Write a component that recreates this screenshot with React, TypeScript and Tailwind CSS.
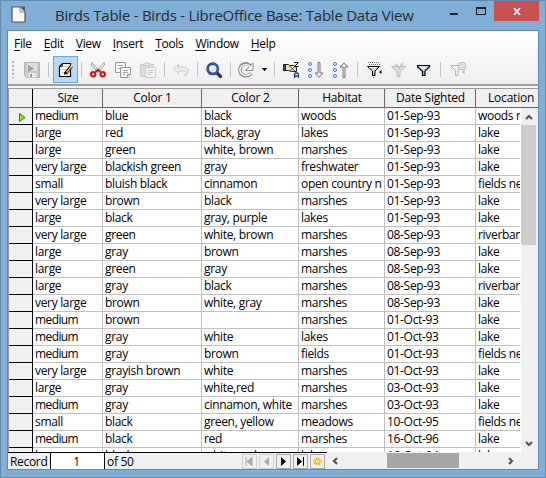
import type { ReactNode } from "react";

const rows: string[][] = [
  ["medium", "blue", "black", "woods", "01-Sep-93", "woods near"],
  ["large", "red", "black, gray", "lakes", "01-Sep-93", "lake"],
  ["large", "green", "white, brown", "marshes", "01-Sep-93", "lake"],
  ["very large", "blackish green", "gray", "freshwater", "01-Sep-93", "lake"],
  ["small", "bluish black", "cinnamon", "open country near", "01-Sep-93", "fields near"],
  ["very large", "brown", "black", "marshes", "01-Sep-93", "lake"],
  ["large", "black", "gray, purple", "lakes", "01-Sep-93", "lake"],
  ["very large", "green", "white, brown", "marshes", "08-Sep-93", "riverbank"],
  ["large", "gray", "brown", "marshes", "08-Sep-93", "lake"],
  ["large", "green", "gray", "marshes", "08-Sep-93", "lake"],
  ["large", "gray", "black", "marshes", "08-Sep-93", "riverbank"],
  ["very large", "brown", "white, gray", "marshes", "08-Sep-93", "lake"],
  ["medium", "brown", "", "marshes", "01-Oct-93", "lake"],
  ["medium", "gray", "white", "lakes", "01-Oct-93", "lake"],
  ["medium", "gray", "brown", "fields", "01-Oct-93", "fields near"],
  ["very large", "grayish brown", "white", "marshes", "01-Oct-93", "lake"],
  ["large", "gray", "white,red", "marshes", "03-Oct-93", "lake"],
  ["medium", "gray", "cinnamon, white", "marshes", "03-Oct-93", "lake"],
  ["small", "black", "green, yellow", "meadows", "10-Oct-95", "fields near"],
  ["medium", "black", "red", "marshes", "16-Oct-96", "lake"],
  ["large", "black", "white, red", "lakes", "16-Oct-94", "lake"],
];

const headers = ["Size", "Color 1", "Color 2", "Habitat", "Date Sighted", "Location"];
const menus = ["File", "Edit", "View", "Insert", "Tools", "Window", "Help"];
const bodyGrid = "grid grid-cols-[24px_70px_99px_97px_86px_91px_44px]";

function Icon({ children, className = "" }: { children: ReactNode; className?: string }) {
  return (
    <svg viewBox="0 0 16 16" className={`h-4 w-4 shrink-0 ${className}`} fill="none">
      {children}
    </svg>
  );
}

function Sep({ className = "" }: { className?: string }) {
  return <div className={`h-[15px] w-px shrink-0 bg-[#c2c2c2] ${className}`} />;
}

function Toolbar() {
  return (
    <div className="flex h-[29px] items-center">
      <svg viewBox="0 0 3 17" className="ml-1 h-[17px] w-[3px] shrink-0">
        <path d="M1 0v17" stroke="#777" strokeWidth="1" strokeDasharray="2 2" />
      </svg>
      <Icon className="ml-[9px]">
        <path d="M.5.500h15v15H2.5L.5 13.500V.5z" fill="#c9c9c9" stroke="#b0b0b0" />
        <path d="M3 1h10v8H3z" fill="#dedede" />
        <path d="M4.500 11h8v4.500h-8z" fill="#e8e8e8" />
        <path d="M6 12h2v3H6z" fill="#999" />
        <path d="M4 3l6 3.500L4 10z" fill="#9c9c9c" />
      </Icon>
      <Sep className="ml-2" />
      <div className="ml-1 flex h-[27px] w-[25px] shrink-0 items-center justify-center border border-[#66a7e8] bg-[#b9d8f5]">
        <Icon>
          <path d="M4.500 1.500h8v13h-11v-10z" fill="#fff" stroke="#000" strokeWidth="1.200" />
          <path d="M1.500 4.500h3v-3" stroke="#000" strokeWidth=".8" />
          <path d="M5.500 4.500h5M4 7.500h4M4 10.500h3" stroke="#c4c4c4" />
          <path d="M7.500 11.500l6-7.500" stroke="#000" strokeWidth="3.400" />
          <path d="M8.500 10.500l5-6.300" stroke="#e9b52f" strokeWidth="1.700" />
          <path d="M6 13l.5-3 2 1.500z" fill="#000" />
          <path d="M13 4.800l1.200-1.500" stroke="#f5df9c" strokeWidth="1.700" />
        </Icon>
      </div>
      <Sep className="ml-[3px]" />
      <Icon className="ml-2">
        <path d="M2 .5l8.500 9-2 1L1.500 3zM14 .5L5.500 9.500l2 1L14.500 3z" fill="#eee" stroke="#929696" strokeWidth=".9" />
        <path d="M5.500 9.500L8 8l2.500 1.500" stroke="#b51a1f" strokeWidth="2" />
        <circle cx="3.200" cy="12.300" r="2.200" stroke="#d4141e" strokeWidth="2.100" />
        <circle cx="12.800" cy="12.300" r="2.200" stroke="#d4141e" strokeWidth="2.100" />
      </Icon>
      <Icon className="ml-[9px]">
        <path d="M.5.500h10v10H.5z" fill="#f7f7f7" stroke="#969696" />
        <path d="M3 3.500h5M3 6.500h3" stroke="#aaa" />
        <path d="M5.500 5.500h10v7l-3 3h-7z" fill="#f7f7f7" stroke="#969696" />
        <path d="M8 8.500h5M8 10.500h5M8 12.500h2" stroke="#aaa" />
        <path d="M12.500 15.500v-3h3" fill="#ddd" stroke="#969696" />
      </Icon>
      <Icon className="ml-[9px]">
        <path d="M.5 2.500h13v12H.5z" fill="#ddd" stroke="#c9c9c9" />
        <path d="M4 3.500V1.500h2C6 0 8 0 8 1.500h2v2z" fill="#eee" stroke="#c5c5c5" />
        <path d="M5.500 5.500h10v10h-10z" fill="#f2f2f2" stroke="#ccc" />
        <path d="M8 8.500h5M8 10.500h5M8 12.500h3" stroke="#ccc" />
      </Icon>
      <Sep className="ml-2" />
      <Icon className="ml-2">
        <path d="M.5 6.500l5-4v2.500h5q4.500 0 4.500 4c0 3-1.500 4-4 5 1.500-1.500 2-2.500 2-4q0-1-2.500-1h-5v3z" fill="#ececec" stroke="#cdcdcd" />
      </Icon>
      <Sep className="ml-2" />
      <Icon className="ml-2">
        <path d="M10.500 10.500l4 4" stroke="#3d3434" strokeWidth="3.200" strokeLinecap="round" />
        <circle cx="6.700" cy="6.800" r="5.200" fill="#dbe8f8" stroke="#243d8b" strokeWidth="2.600" />
        <circle cx="6.700" cy="6.800" r="5.300" stroke="#496fd0" strokeWidth=".8" />
        <path d="M4.500 6.500q.5-2 2.500-2" stroke="#fff" strokeWidth="1.200" />
      </Icon>
      <Sep className="ml-2" />
      <Icon className="ml-[7px]">
        <path d="M13 5C9-.5 2 2 2 8c0 6 7 7.500 11.500 3.500" stroke="#8d8d8d" strokeWidth="3.600" />
        <path d="M15 .8v7.700H7.500L10 6l3-3z" fill="#efefef" stroke="#8d8d8d" strokeWidth="1" />
        <path d="M12.500 5C9 .5 2 3 2 8c0 5.500 7 7 11 3.500" stroke="#efefef" strokeWidth="1.700" />
      </Icon>
      <svg viewBox="0 0 5 3" className="ml-2 h-[3px] w-[5px] shrink-0" shapeRendering="crispEdges">
        <path d="M0 0h5v1H0zM1 1h3v1H1zM2 2h1v1H2z" fill="#000" />
      </svg>
      <Sep className="ml-[7px]" />
      <Icon className="ml-2">
        <path d="M.5 2.500h5l1 1h4l3 2v4h-5l-3-1h-5z" fill="#f0dfb5" stroke="#222" />
        <path d="M.5 2.500h2v6h-2z" fill="#555" stroke="#222" />
        <path d="M6 4l6 5M7 9l5-5" stroke="#444" strokeWidth=".8" />
        <path d="M11 .5h4.500l-4 4h4" stroke="#111" />
        <path d="M11.500 16v-4l1-1h2l1 1v4m-4-2h4" stroke="#203f65" strokeWidth="1.300" />
      </Icon>
      <Icon className="ml-[9px]">
        <path d="M10 .5h2v10.500h3l-4 4.500-4-4.500h3z" fill="#eee" stroke="#777" />
        {[2, 8, 14].map((y) => <circle key={y} cx="2" cy={y} r="1.500" fill="#f5f9ff" stroke="#4278b9" />)}
      </Icon>
      <Icon className="ml-[9px]">
        <path d="M10 15.500h2V5h3L11 .8 7 5h3z" fill="#eee" stroke="#777" />
        {[2, 8, 14].map((y) => <circle key={y} cx="2" cy={y} r="1.500" fill="#f5f9ff" stroke="#4278b9" />)}
      </Icon>
      <Sep className="ml-2" />
      <Icon className="ml-2">
        <path d="M2 .5h11M3 2.500h11" stroke="#777" strokeDasharray="1 1" />
        <path d="M1.500 4.500h12L9 9v4.500H6.500V9z" fill="#c9c9c9" stroke="#000" />
        <path d="M3 5.500h7l-3 3" stroke="#fff" />
        <path d="M15.500 8v4l-2.500-2z" fill="#000" />
        <path d="M7 15.500h1" stroke="#777" />
      </Icon>
      <Icon className="ml-[9px]">
        <path d="M.5 4.500h14L9 9.500v5H6v-5z" fill="#ddd" stroke="#b9b9b9" />
        <path d="M4.500 2l3.500 4 4-5" stroke="#c4c4c4" strokeWidth="2" />
      </Icon>
      <Icon className="ml-[9px]">
        <path d="M1.500 3.500h12v1.200L9 9.200v4.300H6.500V9.200L1.500 4.700z" fill="#a8c3e5" stroke="#000" strokeWidth="1.200" />
        <path d="M3 4.500h8l-4 4" fill="#fff" opacity=".8" />
      </Icon>
      <Sep className="ml-2" />
      <Icon className="ml-[9px]">
        <path d="M.5 3.500h11L8 8.500v5H5.500v-5z" fill="#eee" stroke="#b4b4b4" />
        <path d="M9 1h2l1-1 1 1h2v2l1 1-1 1v2h-2l-1 1-1-1H9V5L8 4l1-1z" fill="#eee" stroke="#b4b4b4" />
        <path d="M10 4h1m2 0h1M12 2v1m0 2v1" stroke="#aaa" />
        <path d="M14.500 8v4L12 10z" fill="#aaa" />
      </Icon>
    </div>
  );
}

function Chevron({ path }: { path: string }) {
  return <svg viewBox="0 0 8 8" className="h-2 w-2 shrink-0"><path d={path} fill="none" stroke="#555" strokeWidth="2.200" /></svg>;
}

function NavButton({ children, disabled = false }: { children: ReactNode; disabled?: boolean }) {
  return (
    <div className={`flex h-[15px] w-[15px] items-center justify-center border ${disabled ? "border-[#d0d0d0]" : "border-[#a9a9a9]"}`}>
      <svg viewBox="0 0 9 9" className="h-[9px] w-[9px]">{children}</svg>
    </div>
  );
}

function DataTable() {
  return (
    <div className="border-l border-t border-[#999]">
      <div className={`${bodyGrid} h-[19px] overflow-hidden border-b border-[#666] bg-[#f0f0f0] tracking-[-0.2px]`}>
        <div className="border-r border-black" />
        {headers.map((h, i) => (
          <div key={h} className={`h-[18px] text-center leading-[17px] ${i === 5 ? "w-[61px] overflow-hidden pl-[12px] text-left" : "border-r border-[#666] pl-px"}`}>{h}</div>
        ))}
      </div>
      <div className="flex h-[344px]">
        <div className="w-[512px] shrink-0 overflow-hidden bg-white">
          {rows.map((row, r) => (
            <div key={r} className={`${bodyGrid} h-[17px]`}>
              <div className="flex items-center border-b border-r border-black bg-[#f0f0f0]">
                {r === 0 && (
                  <svg viewBox="0 0 7 9" className="ml-[10px] mt-0.5 h-[9px] w-[7px]"><path d="M.5.500l5.500 4-5.500 4z" fill="#8fdd2e" stroke="#317c0e" /></svg>
                )}
              </div>
              {row.map((cell, c) => (
                <div key={c} className={`h-[17px] min-w-0 border-b border-[#c0c0c0] pl-[2px] ${c < 5 ? "border-r pr-[2px]" : ""}`}>
                  <div className={`h-4 overflow-hidden whitespace-nowrap leading-[16px] ${cell === "medium" ? "tracking-[-0.6px]" : ""}`}>{cell}</div>
                </div>
              ))}
            </div>
          ))}
        </div>
        <div className="flex w-[15px] flex-col items-center bg-[#f0f0f0]">
          <div className="flex h-[17px] items-center"><Chevron path="M1 6l3-3 3 3" /></div>
          <div className="h-[120px] w-[15px] bg-[#cdcdcd]" />
          <div className="mt-auto flex h-[17px] items-center"><Chevron path="M1 2l3 3 3-3" /></div>
        </div>
      </div>
    </div>
  );
}

function Footer() {
  return (
    <div className="flex h-[17px] bg-[#f0f0f0]">
      <div className="flex w-[319px] border-t border-black">
        <div className="w-[42px] pl-[2px] leading-[17px]">Record</div>
        <div className="w-[55px] border-x border-black bg-white pr-0.5 text-center leading-[17px]">1</div>
        <div className="w-[137px] pl-[2px] leading-[17px]">of 50</div>
        <div className="flex gap-[2px] pt-px">
          <NavButton disabled><path d="M1 0v9M2 4.500L7 0v9z" fill="#aaa" stroke="#aaa" /></NavButton>
          <NavButton disabled><path d="M7 0v9L2 4.500z" fill="#aaa" /></NavButton>
          <NavButton><path d="M2 0v9l5-4.500z" fill="#000" /></NavButton>
          <NavButton><path d="M1 0v9l5-4.500zM7 0h1v9H7z" fill="#000" /></NavButton>
          <NavButton>
            <circle cx="4.500" cy="4.500" r="3.700" fill="none" stroke="#ffbd00" strokeWidth="1.600" strokeDasharray="1.500 1.400" />
            <circle cx="4.500" cy="4.500" r="2.400" fill="#ffe57a" stroke="#e9a500" strokeWidth="1" />
          </NavButton>
        </div>
      </div>
      <div className="flex w-[193px] items-center">
        <div className="flex w-[60px] pl-1"><Chevron path="M6 1L3 4l3 3" /></div>
        <div className="h-[15px] w-[72px] bg-[#a6a6a6]" />
        <div className="ml-[48px]"><Chevron path="M2 1l3 3-3 3" /></div>
      </div>
    </div>
  );
}

export default function App() {
  return (
    <div className="h-[478px] w-[546px] overflow-hidden border border-[#6189ad] bg-[#80aed5] font-['Open_Sans',sans-serif] text-[12px] tracking-[-0.32px] text-black">
      <div className="flex h-[29px] items-start pl-[10px] pr-[6px]">
        <svg viewBox="0 0 15 17" className="mt-[5px] h-[17px] w-[15px] shrink-0">
          <path d="M1 1h8l5 5v10H1z" fill="#f7f7f7" stroke="#555" strokeWidth="1.200" />
          <path d="M8.500.5H14v6z" fill="#505860" />
          <path d="M9 1v5h5" fill="#ddd" stroke="#777" strokeWidth=".7" />
        </svg>
        <div className="ml-[29px] mt-[3px] w-[370px] shrink-0 whitespace-nowrap text-[15px] leading-[22px] tracking-[-0.25px] text-[#252b30]">Birds Table - Birds - LibreOffice Base: Table Data View</div>
        <div className="ml-[25px] mt-[12px] h-[2px] w-2 shrink-0 bg-[#222]" />
        <div className="ml-[18px] mt-[6px] h-2 w-[10px] shrink-0 border border-t-2 border-[#222]" />
        <div className="ml-2 flex h-5 w-[45px] shrink-0 items-center justify-center bg-[#c75050]">
          <svg viewBox="0 0 8 7" className="h-[7px] w-2"><path d="M1 0l6 7M7 0L1 7" stroke="#fff" strokeWidth="1.700" /></svg>
        </div>
      </div>
      <div className="ml-[6px] h-[440px] w-[532px] border border-[#6189ad] bg-[#f0f0f0]">
        <div className="h-[53px] bg-gradient-to-b from-white to-[#efefef]">
          <nav className="flex h-6 items-center gap-[12px] pl-[6px]">
            {menus.map((m) => <span key={m} className="leading-[17px]"><span className="underline underline-offset-2">{m[0]}</span>{m.slice(1)}</span>)}
          </nav>
          <Toolbar />
        </div>
        <div className="h-[2px] bg-[#a0a0a0]" />
        <div className="h-[2px] bg-[#f5f5f5]" />
        <DataTable />
        <Footer />
      </div>
    </div>
  );
}
